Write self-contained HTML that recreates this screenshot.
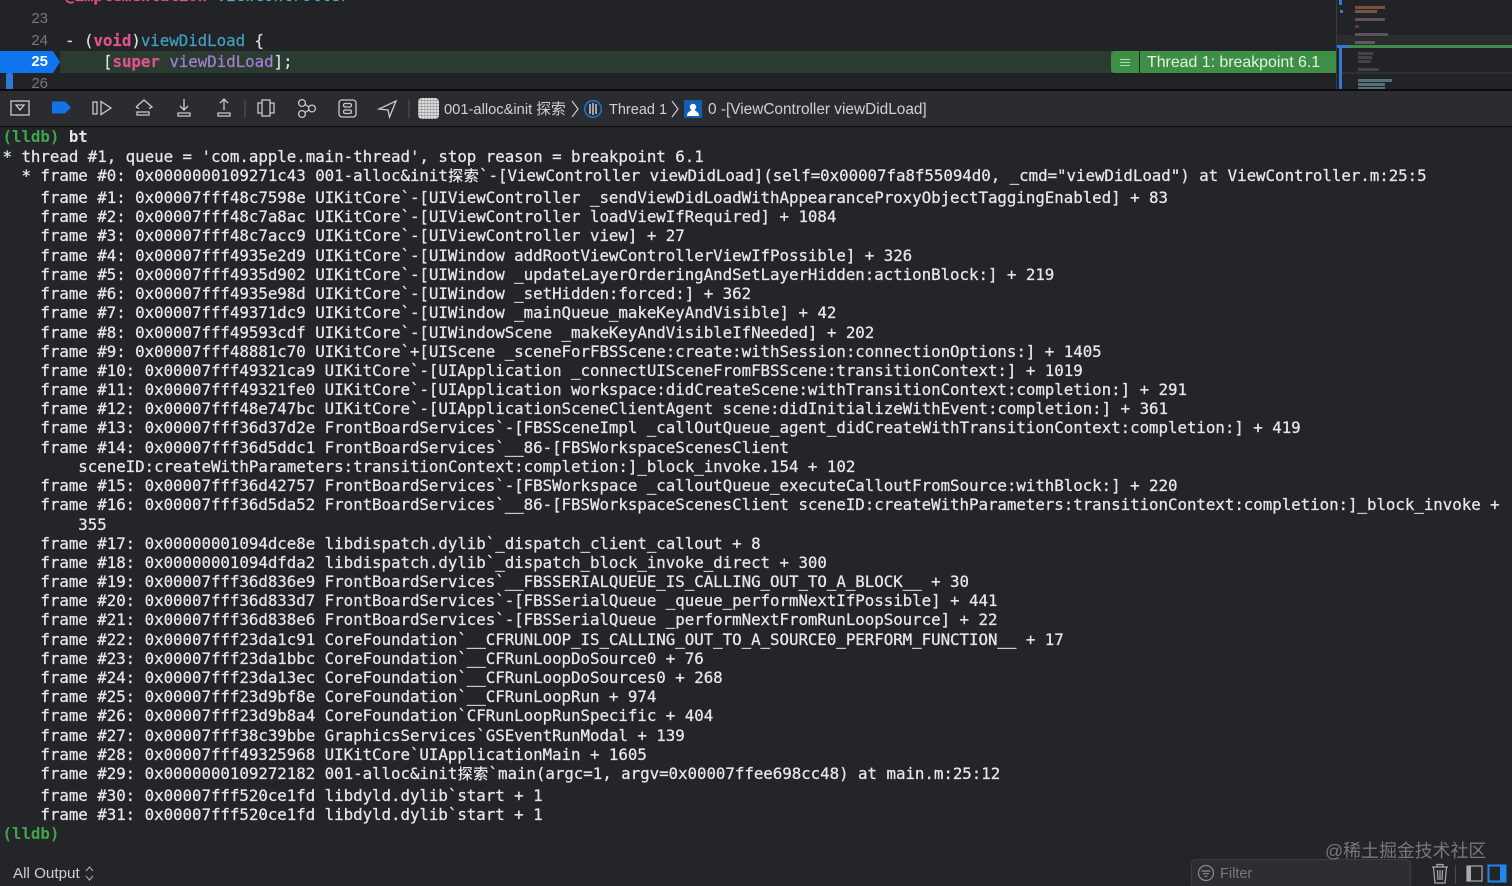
<!DOCTYPE html>
<html><head><meta charset="utf-8">
<style>
html,body{margin:0;padding:0;background:#242528}
#r{position:relative;width:1512px;height:886px;overflow:hidden;background:#242528}
.a{position:absolute}
.l{position:absolute;left:2.5px;height:20px;line-height:20px;white-space:pre;font-family:"DejaVu Sans Mono","Liberation Mono",monospace;font-size:15.8px;letter-spacing:-0.035px;color:#e8e8e8;-webkit-text-stroke:.25px #e8e8e8}
.c{font-family:"Noto Sans CJK SC",sans-serif;display:inline-block;width:15.6px;font-size:15px;font-weight:500;text-align:center;letter-spacing:0;-webkit-text-stroke:0}
.g{color:#3fa64a;font-weight:bold;-webkit-text-stroke:0}
.b{font-weight:bold;-webkit-text-stroke:0}
.e{position:absolute;white-space:pre;font-family:"DejaVu Sans Mono","Liberation Mono",monospace;font-size:15.8px;letter-spacing:-0.035px;height:22px;line-height:22px;color:#dfdfe0;-webkit-text-stroke:.2px}
.n{position:absolute;width:48px;left:0;text-align:right;font-family:"Liberation Sans",sans-serif;font-size:15px;height:20px;line-height:20px;color:#77787b}
.t{position:absolute;font-family:"Liberation Sans",sans-serif;white-space:pre;color:#cfd0d1;font-size:14.5px;line-height:20px;height:20px}
.m{position:absolute;height:3px}
svg{position:absolute;overflow:visible}
</style></head><body><div id="r">

<!-- editor -->
<div class="a" style="left:0;top:0;width:1512px;height:90px;background:#222327"></div>
<div class="a" style="left:60px;top:51px;width:1052px;height:22px;background:#2a3c30"></div>
<div class="e" style="left:65px;top:-15px;color:#e0528f;font-weight:bold">@implementation <span style="color:#4fb0c6;font-weight:normal">ViewController</span></div>
<div class="n" style="top:9px">23</div>
<div class="n" style="top:31px">24</div>
<div class="n" style="top:74px">26</div>
<div class="e" style="left:65px;top:30px">- (<span style="color:#e0528f;font-weight:bold">void</span>)<span style="color:#41a1c0">viewDidLoad</span> {</div>
<svg style="left:0;top:51px" width="60" height="22"><path d="M0 0H53L60 11L53 22H0Z" fill="#0f74ee"/></svg>
<div class="n" style="top:52px;color:#fff;font-weight:bold">25</div>
<div class="e" style="left:103px;top:51px">[<span style="color:#e0528f;font-weight:bold">super</span> <span style="color:#a37fd6">viewDidLoad</span>];</div>
<div class="a" style="left:6px;top:73px;width:7px;height:17px;background:#2f78d6;border-radius:2px 2px 0 0"></div>

<!-- breakpoint banner -->
<div class="a" style="left:1111px;top:51px;width:28px;height:22px;background:#3d8f45;border-radius:3px 0 0 3px"></div>
<div class="a" style="left:1140px;top:51px;width:196px;height:22px;background:#3d8f45"></div>
<div class="a" style="left:1120px;top:59px;width:10px;height:1px;background:#b5d8b7"></div>
<div class="a" style="left:1120px;top:62px;width:10px;height:1px;background:#b5d8b7"></div>
<div class="a" style="left:1120px;top:65px;width:10px;height:1px;background:#b5d8b7"></div>
<div class="t" style="left:1147px;top:52px;color:#e3f2e3;font-size:15.9px;line-height:21px">Thread 1: breakpoint 6.1</div>

<!-- minimap -->
<div class="a" style="left:1336px;top:0;width:1px;height:90px;background:#3a3b3e"></div>
<div class="a" style="left:1337px;top:35px;width:175px;height:11px;background:#2b2c30"></div>
<div class="a" style="left:1337px;top:45px;width:175px;height:3px;background:#3f8a48"></div>
<div class="a" style="left:1337px;top:45px;width:11px;height:3px;background:#2f78d6"></div>
<div class="a" style="left:1339px;top:48px;width:3px;height:42px;background:#2f78d6"></div>
<div class="a" style="left:1339px;top:0;width:3px;height:5px;background:#2f78d6"></div>
<div class="a" style="left:1340px;top:10px;width:3px;height:3px;background:#2f78d6"></div>
<div class="m" style="left:1355px;top:6px;width:30px;background:#7a4f42"></div>
<div class="m" style="left:1355px;top:10px;width:22px;background:#75583a"></div>
<div class="m" style="left:1355px;top:18px;width:30px;background:#5d5258"></div>
<div class="m" style="left:1355px;top:25px;width:4px;background:#6a3550"></div>
<div class="m" style="left:1355px;top:33px;width:33px;background:#5b5260"></div>
<div class="m" style="left:1355px;top:41px;width:20px;background:#5a5a60"></div>
<div class="m" style="left:1358px;top:52px;width:15px;background:#434447"></div>
<div class="m" style="left:1358px;top:56px;width:14px;background:#434447"></div>
<div class="m" style="left:1358px;top:60px;width:13px;background:#434447"></div>
<div class="m" style="left:1358px;top:68px;width:21px;background:#434447"></div>
<div class="a" style="left:1342px;top:72px;width:170px;height:2px;background:#2f3033"></div>
<div class="m" style="left:1358px;top:79px;width:34px;background:#56707a"></div>
<div class="m" style="left:1358px;top:83px;width:27px;background:#56707a"></div>
<div class="m" style="left:1358px;top:87px;width:27px;background:#56707a"></div>

<!-- toolbar -->
<div class="a" style="left:0;top:89px;width:1512px;height:2px;background:#0c0c0d"></div>
<div class="a" style="left:0;top:91px;width:1512px;height:35px;background:#2b2c2f"></div>
<div class="a" style="left:0;top:126px;width:1512px;height:1px;background:#0c0c0d"></div>

<svg style="left:0;top:90px" width="420" height="36" fill="none" stroke="#c9cacb" stroke-width="1.3">
 <rect x="11" y="11" width="18" height="14"/>
 <path d="M16 15H24L20 20Z"/>
 <path d="M52 12H65L71 18L65 24H52Z" fill="#1273e6" stroke="none" transform="translate(0,-0.5)"/>
 <rect x="93" y="12" width="4" height="12"/>
 <path d="M101 11.5L111 18L101 24.5Z"/>
 <path d="M136 18L144 11L152 18L149 19.5M136 18L139 19.5M137 23H149V26H137Z" transform="translate(0,-1)"/>
 <path d="M184 10V21M180 17L184 21L188 17M178 24H190V27H178Z" transform="translate(0,-1)"/>
 <path d="M224 21V10M220 14L224 10L228 14M218 24H230V27H218Z" transform="translate(0,-1)"/>
 <rect x="262" y="10" width="8" height="16"/>
 <path d="M262 13H258V23H262M270 13H274V23H270"/>
 <circle cx="302" cy="13" r="3.4"/><circle cx="312" cy="18.5" r="3.4"/><circle cx="302" cy="24" r="3.4"/>
 <path d="M305 14.5L309 17M305 22.5L309 20"/>
 <rect x="339" y="10" width="17" height="17" rx="3"/>
 <rect x="343.5" y="13.5" width="8" height="3.5" rx="1.7"/><rect x="343.5" y="20" width="8" height="3.5" rx="1.7"/>
 <path d="M396 11L379 19L388 20L389.5 27Z"/>
 <path d="M409 10V28" stroke="#4a4b4e"/>
 <path d="M245 10V28" stroke="#4a4b4e"/>
</svg>
<div class="a" style="left:418px;top:98px;width:21px;height:21px;border-radius:4px;background:repeating-linear-gradient(0deg,#a9a9a9 0 1px,#dcdcdc 1px 3px)"></div>
<div class="a" style="left:418px;top:98px;width:21px;height:21px;border-radius:4px;background:repeating-linear-gradient(90deg,rgba(150,150,150,.55) 0 1px,rgba(220,220,220,0) 1px 3px)"></div>
<div class="t" style="left:444px;top:100px;font-family:'Liberation Sans','Noto Sans CJK SC',sans-serif;font-size:14.7px">001-alloc&amp;init 探索</div>
<svg style="left:570px;top:99px" width="10" height="20" fill="none" stroke="#c9cacb" stroke-width="1.2"><path d="M2 2L8 10L2 18"/></svg>
<svg style="left:583px;top:99px" width="20" height="20" fill="none"><circle cx="10" cy="10" r="8.3" stroke="#1a74d8" stroke-width="1.6"/><path d="M7 5V15M10 4V16M13 5V15" stroke="#dfe3ea" stroke-width="1.3"/></svg>
<div class="t" style="left:609px;top:100px">Thread 1</div>
<svg style="left:670px;top:99px" width="10" height="20" fill="none" stroke="#c9cacb" stroke-width="1.2"><path d="M2 2L8 10L2 18"/></svg>
<svg style="left:684px;top:100px" width="18" height="18"><rect width="18" height="18" fill="#125fb6"/><circle cx="9" cy="7" r="3.2" fill="#fff"/><path d="M3 16C3 12 6 11.5 7.5 10H10.5C12 11.5 15 12 15 16Z" fill="#fff"/></svg>
<div class="t" style="left:708px;top:100px;font-size:15.4px">0 -[ViewController viewDidLoad]</div>

<!-- console -->
<div class="l" style="top:127px"><span class="g">(lldb)</span><span class="b"> bt</span></div>
<div class="l" style="top:147px">* thread #1, queue = 'com.apple.main-thread', stop reason = breakpoint 6.1</div>
<div class="l" style="top:166px">  * frame #0: 0x0000000109271c43 001-alloc&amp;init<span class="c">探</span><span class="c">索</span>`-[ViewController viewDidLoad](self=0x00007fa8f55094d0, _cmd="viewDidLoad") at ViewController.m:25:5</div>
<div class="l" style="top:188px">    frame #1: 0x00007fff48c7598e UIKitCore`-[UIViewController _sendViewDidLoadWithAppearanceProxyObjectTaggingEnabled] + 83</div>
<div class="l" style="top:207px">    frame #2: 0x00007fff48c7a8ac UIKitCore`-[UIViewController loadViewIfRequired] + 1084</div>
<div class="l" style="top:226px">    frame #3: 0x00007fff48c7acc9 UIKitCore`-[UIViewController view] + 27</div>
<div class="l" style="top:246px">    frame #4: 0x00007fff4935e2d9 UIKitCore`-[UIWindow addRootViewControllerViewIfPossible] + 326</div>
<div class="l" style="top:265px">    frame #5: 0x00007fff4935d902 UIKitCore`-[UIWindow _updateLayerOrderingAndSetLayerHidden:actionBlock:] + 219</div>
<div class="l" style="top:284px">    frame #6: 0x00007fff4935e98d UIKitCore`-[UIWindow _setHidden:forced:] + 362</div>
<div class="l" style="top:303px">    frame #7: 0x00007fff49371dc9 UIKitCore`-[UIWindow _mainQueue_makeKeyAndVisible] + 42</div>
<div class="l" style="top:323px">    frame #8: 0x00007fff49593cdf UIKitCore`-[UIWindowScene _makeKeyAndVisibleIfNeeded] + 202</div>
<div class="l" style="top:342px">    frame #9: 0x00007fff48881c70 UIKitCore`+[UIScene _sceneForFBSScene:create:withSession:connectionOptions:] + 1405</div>
<div class="l" style="top:361px">    frame #10: 0x00007fff49321ca9 UIKitCore`-[UIApplication _connectUISceneFromFBSScene:transitionContext:] + 1019</div>
<div class="l" style="top:380px">    frame #11: 0x00007fff49321fe0 UIKitCore`-[UIApplication workspace:didCreateScene:withTransitionContext:completion:] + 291</div>
<div class="l" style="top:399px">    frame #12: 0x00007fff48e747bc UIKitCore`-[UIApplicationSceneClientAgent scene:didInitializeWithEvent:completion:] + 361</div>
<div class="l" style="top:418px">    frame #13: 0x00007fff36d37d2e FrontBoardServices`-[FBSSceneImpl _callOutQueue_agent_didCreateWithTransitionContext:completion:] + 419</div>
<div class="l" style="top:438px">    frame #14: 0x00007fff36d5ddc1 FrontBoardServices`__86-[FBSWorkspaceScenesClient</div>
<div class="l" style="top:457px">        sceneID:createWithParameters:transitionContext:completion:]_block_invoke.154 + 102</div>
<div class="l" style="top:476px">    frame #15: 0x00007fff36d42757 FrontBoardServices`-[FBSWorkspace _calloutQueue_executeCalloutFromSource:withBlock:] + 220</div>
<div class="l" style="top:495px">    frame #16: 0x00007fff36d5da52 FrontBoardServices`__86-[FBSWorkspaceScenesClient sceneID:createWithParameters:transitionContext:completion:]_block_invoke +</div>
<div class="l" style="top:515px">        355</div>
<div class="l" style="top:534px">    frame #17: 0x00000001094dce8e libdispatch.dylib`_dispatch_client_callout + 8</div>
<div class="l" style="top:553px">    frame #18: 0x00000001094dfda2 libdispatch.dylib`_dispatch_block_invoke_direct + 300</div>
<div class="l" style="top:572px">    frame #19: 0x00007fff36d836e9 FrontBoardServices`__FBSSERIALQUEUE_IS_CALLING_OUT_TO_A_BLOCK__ + 30</div>
<div class="l" style="top:591px">    frame #20: 0x00007fff36d833d7 FrontBoardServices`-[FBSSerialQueue _queue_performNextIfPossible] + 441</div>
<div class="l" style="top:610px">    frame #21: 0x00007fff36d838e6 FrontBoardServices`-[FBSSerialQueue _performNextFromRunLoopSource] + 22</div>
<div class="l" style="top:630px">    frame #22: 0x00007fff23da1c91 CoreFoundation`__CFRUNLOOP_IS_CALLING_OUT_TO_A_SOURCE0_PERFORM_FUNCTION__ + 17</div>
<div class="l" style="top:649px">    frame #23: 0x00007fff23da1bbc CoreFoundation`__CFRunLoopDoSource0 + 76</div>
<div class="l" style="top:668px">    frame #24: 0x00007fff23da13ec CoreFoundation`__CFRunLoopDoSources0 + 268</div>
<div class="l" style="top:687px">    frame #25: 0x00007fff23d9bf8e CoreFoundation`__CFRunLoopRun + 974</div>
<div class="l" style="top:706px">    frame #26: 0x00007fff23d9b8a4 CoreFoundation`CFRunLoopRunSpecific + 404</div>
<div class="l" style="top:726px">    frame #27: 0x00007fff38c39bbe GraphicsServices`GSEventRunModal + 139</div>
<div class="l" style="top:745px">    frame #28: 0x00007fff49325968 UIKitCore`UIApplicationMain + 1605</div>
<div class="l" style="top:764px">    frame #29: 0x0000000109272182 001-alloc&amp;init<span class="c">探</span><span class="c">索</span>`main(argc=1, argv=0x00007ffee698cc48) at main.m:25:12</div>
<div class="l" style="top:786px">    frame #30: 0x00007fff520ce1fd libdyld.dylib`start + 1</div>
<div class="l" style="top:805px">    frame #31: 0x00007fff520ce1fd libdyld.dylib`start + 1</div>
<div class="l" style="top:824px"><span class="g">(lldb)</span></div>

<!-- bottom bar -->
<div class="t" style="left:13px;top:864px;font-size:15.2px">All Output</div>
<svg style="left:84px;top:865px" width="12" height="17" fill="none" stroke="#a9aaab" stroke-width="1.1"><path d="M2 6L5.5 2L9 6M2 11L5.5 15L9 11"/></svg>
<div class="a" style="left:1191px;top:859px;width:220px;height:30px;background:#2d2e31;border:1px solid #3c3d40;border-radius:5px;box-sizing:border-box"></div>
<svg style="left:1197px;top:864px" width="18" height="18" fill="none" stroke="#8a8b8d" stroke-width="1.2"><circle cx="9" cy="9" r="7.5"/><path d="M4.5 7H13.5M6 9.7H12M7.5 12.3H10.5"/></svg>
<div class="t" style="left:1220px;top:864px;color:#77787a">Filter</div>
<div class="a" style="left:1325px;top:838px;font-family:'Liberation Sans','Noto Sans CJK SC',sans-serif;font-size:17.9px;line-height:26px;color:#77787a;white-space:pre">@稀土掘金技术社区</div>
<svg style="left:1430px;top:862px" width="82" height="24" fill="none" stroke="#a9aaab" stroke-width="1.2">
 <path d="M2 5H18M7 5V2.5H13V5M3.5 5L5 21H15L16.5 5M7.5 8L8 18M10 8V18M12.5 8L12 18"/>
 <path d="M25.5 3V22" stroke="#4a4b4e"/>
 <rect x="37" y="4" width="15" height="15"/><rect x="37" y="4" width="4" height="15" fill="#a9aaab" stroke="none"/>
 <rect x="58.5" y="3.5" width="17" height="16" stroke="#1f86f0" stroke-width="2"/><rect x="70" y="4" width="5" height="15" fill="#1f86f0" stroke="none"/>
</svg>

</div></body></html>
